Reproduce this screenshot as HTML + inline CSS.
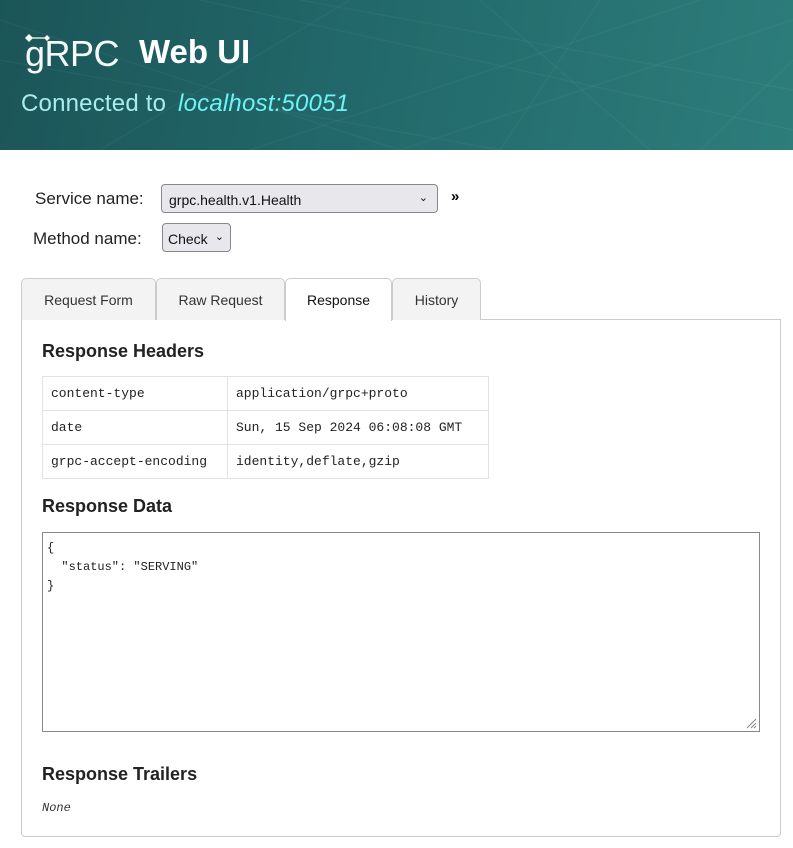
<!DOCTYPE html>
<html><head><style>
body{margin:0;width:793px;height:848px;background:#fff;font-family:"Liberation Sans",Arial,sans-serif;overflow:hidden;position:relative}
.hdr{position:absolute;left:0;top:0;width:793px;height:150px;background:linear-gradient(100deg,#1b5558 0%,#22686a 45%,#2d7d7b 100%);overflow:hidden}
.hdr svg.bg{position:absolute;left:0;top:0}
.abs{position:absolute;white-space:nowrap}
.lbl{font-size:17px;color:#222}
.sel{position:absolute;background:#e8e8ec;border:1px solid #888;border-radius:4px;font-size:14px;color:#111;box-sizing:border-box}
.tab{position:absolute;top:278px;height:42px;box-sizing:border-box;border:1px solid #ccc;border-bottom:none;border-radius:5px 5px 0 0;background:#f3f3f3;font-size:14px;color:#333;text-align:center;line-height:42px}
h3{position:absolute;margin:0;font-size:18px;font-weight:bold;color:#222}
table{position:absolute;left:42px;top:376px;border-collapse:collapse;font-family:"Liberation Mono",monospace;font-size:13px;color:#222}
td{border:1px solid #e2e2e2;height:33px;padding:0 8px}
</style></head><body>
<div class="hdr">
<svg class="bg" width="793" height="150"><g stroke="#ffffff" stroke-opacity="0.04" stroke-width="1.5" fill="none">
<path d="M300 0 L793 90"/><path d="M200 0 L793 130"/><path d="M400 150 L793 20"/><path d="M250 150 L700 0"/><path d="M500 150 L600 0"/><path d="M650 150 L480 0"/><path d="M100 150 L350 0"/><path d="M0 60 L500 150"/><path d="M0 20 L400 150"/><path d="M700 150 L793 60"/></g></svg>
<svg class="abs" style="left:22px;top:32px" width="30" height="12"><path d="M4 6H24" stroke="#fff" stroke-width="1.2"/><path d="M3 6l4-4 4 4-4 4z M22 6l3-3 3 3-3 3z" fill="#fff"/></svg>
<div class="abs" style="left:25px;top:33px;font-size:36px;color:#f4f8f8;letter-spacing:-0.5px">gRPC</div>
<div class="abs" style="left:139px;top:33px;font-size:33px;color:#fff;font-weight:bold">Web UI</div>
<div class="abs" style="left:21px;top:90px;font-size:24px;color:#a8ecef;letter-spacing:0.2px">Connected to <i style="color:#6ef2f4;margin-left:5px">localhost:50051</i></div>
</div>
<div class="abs lbl" style="left:35px;top:189px">Service name:</div>
<div class="sel" style="left:161px;top:184px;width:277px;height:29px;padding:7px 0 0 7px">grpc.health.v1.Health<span style="position:absolute;right:9px;top:6px;font-size:11px">&#8964;</span></div>
<div class="abs" style="left:451px;top:188px;font-size:15px;font-weight:bold">»</div>
<div class="abs lbl" style="left:33px;top:229px">Method name:</div>
<div class="sel" style="left:162px;top:223px;width:69px;height:29px;padding:7px 0 0 5px">Check<span style="position:absolute;right:6px;top:6px;font-size:11px">&#8964;</span></div>
<div style="position:absolute;left:21px;top:319px;width:760px;height:518px;box-sizing:border-box;border:1px solid #ccc;border-radius:0 0 4px 4px"></div>
<div class="tab" style="left:21px;width:135px">Request Form</div>
<div class="tab" style="left:156px;width:129px">Raw Request</div>
<div class="tab" style="left:285px;width:107px;background:#fff;height:43px;color:#111">Response</div>
<div class="tab" style="left:392px;width:89px">History</div>
<h3 style="left:42px;top:341px">Response Headers</h3>
<table>
<tr><td style="width:168px">content-type</td><td style="width:244px">application/grpc+proto</td></tr>
<tr><td>date</td><td>Sun, 15 Sep 2024 06:08:08 GMT</td></tr>
<tr><td>grpc-accept-encoding</td><td>identity,deflate,gzip</td></tr>
</table>
<h3 style="left:42px;top:496px">Response Data</h3>
<div style="position:absolute;left:42px;top:532px;width:718px;height:200px;box-sizing:border-box;border:1px solid #888;font-family:'Liberation Mono',monospace;font-size:12px;color:#222;padding:6px 4px;line-height:19px;white-space:pre">{
  "status": "SERVING"
}</div>
<svg class="abs" style="left:745px;top:717px" width="12" height="12"><path d="M11 2L2 11M11 6L6 11M11 9L9 11" stroke="#888"/></svg>
<h3 style="left:42px;top:764px">Response Trailers</h3>
<div class="abs" style="left:42px;top:801px;font-family:'Liberation Mono',monospace;font-size:12px;font-style:italic;color:#333">None</div>
</body></html>
